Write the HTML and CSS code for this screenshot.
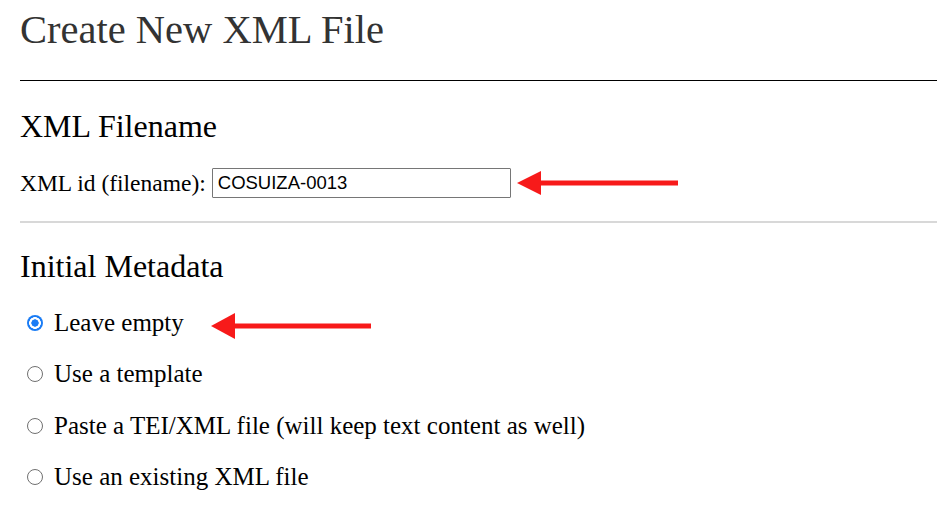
FILE: index.html
```html
<!DOCTYPE html>
<html>
<head>
<meta charset="utf-8">
<link rel="stylesheet" href="styles.css">
</head>
<body>
<h1 class="title">Create New XML File</h1>
<hr class="rule-dark">
<h2 class="section">XML Filename</h2>
<div class="field-row">
  <label class="field-label" for="xmlid">XML id (filename):</label>
  <input class="field-input" id="xmlid" type="text" value="COSUIZA-0013">
  <svg class="arrow arrow-input" width="162" height="26" viewBox="0 0 162 26">
    <polygon points="0,13 24,1 24,25" fill="#f71a1a"/>
    <rect x="22" y="10.5" width="139" height="5" fill="#f71a1a"/>
  </svg>
</div>
<hr class="rule-light">
<h2 class="section section-meta">Initial Metadata</h2>
<div class="options">
  <label class="option">
    <input class="radio" type="radio" name="meta" checked>
    <span>Leave empty</span>
    <svg class="arrow arrow-radio" width="161" height="26" viewBox="0 0 161 26">
      <polygon points="0,13 24,0 24,26" fill="#f71a1a"/>
      <rect x="22" y="10.5" width="138" height="5" fill="#f71a1a"/>
    </svg>
  </label>
  <label class="option">
    <input class="radio" type="radio" name="meta">
    <span>Use a template</span>
  </label>
  <label class="option">
    <input class="radio" type="radio" name="meta">
    <span>Paste a TEI/XML file (will keep text content as well)</span>
  </label>
  <label class="option">
    <input class="radio" type="radio" name="meta">
    <span>Use an existing XML file</span>
  </label>
</div>
</body>
</html>
```

FILE: styles.css
```css
html, body {
  margin: 0;
  padding: 0;
  background: #fff;
}
body {
  padding-left: 20px;
  font-family: "Liberation Serif", "Times New Roman", serif;
  color: #000;
  overflow: hidden;
}
.title {
  margin: 6px 0 0 0;
  font-size: 40.5px;
  line-height: 48px;
  font-weight: normal;
  color: #333;
}
.rule-dark {
  margin: 26px 0 0 0;
  border: 0;
  border-top: 1px solid #000;
  height: 0;
}
.section {
  margin: 26px 0 0 0;
  font-size: 32px;
  line-height: 38px;
  font-weight: normal;
  color: #000;
}
.section-meta {
  margin-top: 24px;
}
.field-row {
  margin-top: 23px;
  display: flex;
  align-items: center;
  height: 30px;
}
.field-label {
  font-size: 23.5px;
  line-height: 30px;
  margin-right: 6px;
}
.field-input {
  box-sizing: border-box;
  width: 299px;
  height: 30px;
  margin: 0;
  padding: 0 5px;
  border: 1px solid #767676;
  border-radius: 1px;
  font-family: "Liberation Sans", Arial, sans-serif;
  font-size: 18.5px;
  color: #000;
  outline: none;
}
.arrow {
  display: block;
  flex: none;
}
.arrow-input {
  margin-left: 6px;
}
.rule-light {
  margin: 23px 0 0 0;
  border: 0;
  border-top: 2px solid #d8d8d8;
  height: 0;
}
.options {
  margin-top: 22.5px;
  display: flex;
  flex-direction: column;
  gap: 21.5px;
}
.option {
  display: flex;
  align-items: center;
  height: 30px;
  font-size: 25px;
  line-height: 30px;
  color: #000;
}
.radio {
  appearance: none;
  -webkit-appearance: none;
  box-sizing: border-box;
  width: 16px;
  height: 16px;
  min-width: 16px;
  margin: 0 11px 0 7px;
  border-radius: 50%;
  border: 1px solid #707070;
  background: #fff;
  flex: none;
}
.radio:checked {
  border: 0;
  background: radial-gradient(circle, #1a7cf5 0 3.4px, #fff 3.9px 5.6px, #1a7cf5 6.1px);
}
.arrow-radio {
  margin-left: 27px;
  margin-top: 6px;
}
```
